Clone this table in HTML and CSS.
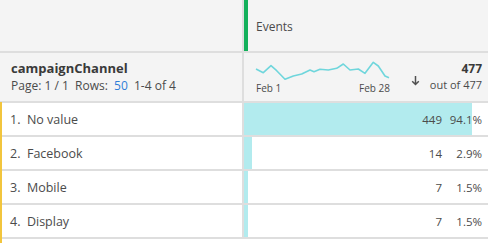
FILE: index.html
```html
<!DOCTYPE html>
<html>
<head>
<meta charset="utf-8">
<link rel="stylesheet" href="styles.css">
</head>
<body>
<div class="table">
  <div class="cell head-left"></div>
  <div class="cell head-right"><span class="metric-marker"></span><span class="metric-name">Events</span></div>

  <div class="cell sum-left">
    <div class="dim-name">campaignChannel</div>
    <div class="pager">Page: 1 / 1&nbsp; Rows:&nbsp; <span class="rows-link">50</span>&nbsp; 1-4 of 4</div>
  </div>
  <div class="cell sum-right">
    <div class="spark">
      <svg width="138" height="24" viewBox="0 0 138 24">
        <polyline fill="none" stroke="#6fd6dc" stroke-width="1.6" stroke-linejoin="round" points="2,11 9.3,14.7 17,7.7 22.7,12.7 31,21.3 39.3,18 47.7,16 56,12 60,13.7 66,11.3 74.3,12 82.7,10.3 89.3,6 96,12 104.3,11 111,15.3 119.3,4.3 124.3,8 131,18 135,19.7"/>
      </svg>
      <div class="spark-labels"><span>Feb 1</span><span>Feb 28</span></div>
    </div>
    <div class="sort">
      <svg width="9" height="11" viewBox="0 0 9 11"><path d="M4.5 1 V9.5 M1.2 6.2 L4.5 9.5 L7.8 6.2" fill="none" stroke="#505050" stroke-width="1.5"/></svg>
    </div>
    <div class="total">
      <div class="total-num">477</div>
      <div class="total-of">out of 477</div>
    </div>
  </div>

  <div class="cell row-left">1.&nbsp; No value</div>
  <div class="cell row-right"><div class="bar" style="width:228px"></div><span class="val">449</span><span class="pct">94.1%</span></div>

  <div class="cell row-left">2.&nbsp; Facebook</div>
  <div class="cell row-right"><div class="bar" style="width:8px"></div><span class="val">14</span><span class="pct">2.9%</span></div>

  <div class="cell row-left">3.&nbsp; Mobile</div>
  <div class="cell row-right"><div class="bar" style="width:4px"></div><span class="val">7</span><span class="pct">1.5%</span></div>

  <div class="cell row-left">4.&nbsp; Display</div>
  <div class="cell row-right"><div class="bar" style="width:4px"></div><span class="val">7</span><span class="pct">1.5%</span></div>
</div>
</body>
</html>
```

FILE: styles.css
```css
html, body {
  margin: 0;
  padding: 0;
  background: #ffffff;
}
body {
  font-family: "Open Sans", "Liberation Sans", sans-serif;
  color: #4b4b4b;
  width: 488px;
  height: 243px;
  overflow: hidden;
}
.table {
  display: grid;
  grid-template-columns: 242px 1fr;
  grid-template-rows: 53px 50px 34px 34px 34px 34px;
  column-gap: 2px;
  row-gap: 0;
  background: #dedede;
  position: relative;
}
.table::before {
  content: "";
  position: absolute;
  left: 0;
  top: 102px;
  width: 2px;
  bottom: -10px;
  background: #f2c53d;
}
.cell {
  margin-bottom: 2px;
  box-sizing: border-box;
}
.head-left, .head-right, .sum-left, .sum-right {
  background: #f4f4f4;
}
.head-right {
  display: flex;
  align-items: center;
}
.metric-marker {
  align-self: stretch;
  width: 4px;
  background: #12b05a;
  margin-right: 8px;
}
.metric-name {
  font-size: 12px;
  padding-top: 2px;
}
.sum-left {
  padding: 7px 0 0 11px;
}
.dim-name {
  font-weight: 700;
  font-size: 13px;
  color: #3a3a3a;
  line-height: 16px;
}
.pager {
  font-size: 12px;
  line-height: 16px;
  margin-top: 2px;
}
.rows-link {
  color: #2f7ed8;
}
.sum-right {
  display: flex;
  align-items: flex-start;
  padding: 5px 6px 0 10px;
}
.spark {
  width: 138px;
  display: flex;
  flex-direction: column;
}
.spark svg {
  display: block;
}
.spark-labels {
  display: flex;
  justify-content: space-between;
  font-size: 10px;
  line-height: 12px;
  padding: 0 2px 0 2px;
}
.sort {
  margin: 17px 0 0 19px;
}
.sort svg {
  display: block;
}
.total {
  margin-left: auto;
  text-align: right;
  padding-top: 3px;
}
.total-num {
  font-weight: 700;
  font-size: 12px;
  line-height: 15px;
  color: #3a3a3a;
}
.total-of {
  font-size: 11px;
  line-height: 15px;
  margin-top: 1px;
}
.row-left {
  background: #ffffff;
  font-size: 12.5px;
  display: flex;
  align-items: center;
  padding-left: 10px;
}
.row-right {
  background: #ffffff;
  position: relative;
  display: flex;
  align-items: center;
  justify-content: flex-end;
  padding-right: 6px;
  font-size: 11.5px;
}
.bar {
  position: absolute;
  left: 0;
  top: 0;
  bottom: 0;
  background: #b2ebee;
}
.val {
  position: relative;
}
.pct {
  position: relative;
  width: 40px;
  text-align: right;
}
```
